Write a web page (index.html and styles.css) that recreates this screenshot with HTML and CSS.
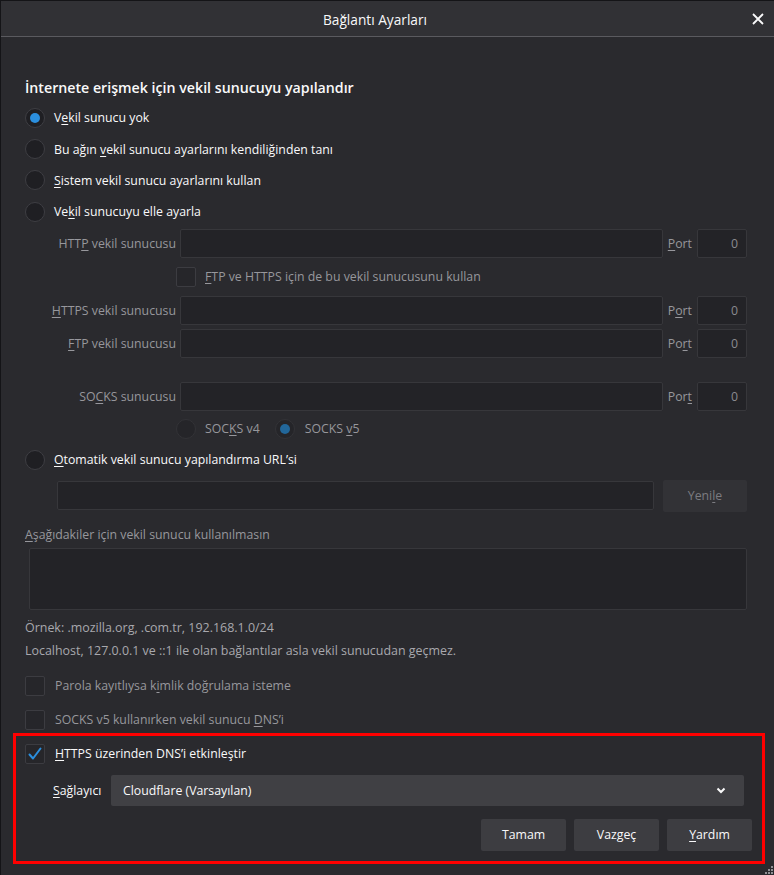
FILE: index.html
```html
<!DOCTYPE html>
<html lang="tr">
<head>
<meta charset="utf-8">
<title>Bağlantı Ayarları</title>
<link rel="stylesheet" href="styles.css">
</head>
<body>
<div class="dialog">
  <header class="titlebar">
    <span></span>
    <span class="title">Bağlantı Ayarları</span>
    <span class="close-wrap">
      <svg class="close" width="12" height="12" viewBox="0 0 12 12"><path d="M1 1 L11 11 M11 1 L1 11" stroke="#f9f9fa" stroke-width="1.8" fill="none"/></svg>
    </span>
  </header>

  <main class="content">
    <h1 class="heading">İnternete erişmek için vekil sunucuyu yapılandır</h1>

    <div class="radios">
      <div class="opt"><span class="radio checked"></span><span>V<u>e</u>kil sunucu yok</span></div>
      <div class="opt"><span class="radio"></span><span>Bu ağın <u>v</u>ekil sunucu ayarlarını kendiliğinden tanı</span></div>
      <div class="opt"><span class="radio"></span><span><u>S</u>istem vekil sunucu ayarlarını kullan</span></div>
      <div class="opt"><span class="radio"></span><span>Ve<u>k</u>il sunucuyu elle ayarla</span></div>
    </div>

    <div class="manual">
      <div class="prow first">
        <span class="plabel">HTT<u>P</u> vekil sunucusu</span>
        <span class="input grow"></span>
        <span class="portlabel"><u>P</u>ort</span>
        <span class="input port">0</span>
      </div>
      <div class="crow share">
        <span class="check dis"></span><span class="dim"><u>F</u>TP ve HTTPS için de bu vekil sunucusunu kullan</span>
      </div>
      <div class="prow">
        <span class="plabel"><u>H</u>TTPS vekil sunucusu</span>
        <span class="input grow"></span>
        <span class="portlabel">P<u>o</u>rt</span>
        <span class="input port">0</span>
      </div>
      <div class="prow tight">
        <span class="plabel"><u>F</u>TP vekil sunucusu</span>
        <span class="input grow"></span>
        <span class="portlabel">Po<u>r</u>t</span>
        <span class="input port">0</span>
      </div>
      <div class="prow socks">
        <span class="plabel">SO<u>C</u>KS sunucusu</span>
        <span class="input grow"></span>
        <span class="portlabel">Por<u>t</u></span>
        <span class="input port">0</span>
      </div>
      <div class="versions">
        <span class="radio dis"></span><span class="dim v4">SOC<u>K</u>S v4</span>
        <span class="radio dis checked"></span><span class="dim">SOCKS <u>v</u>5</span>
      </div>
    </div>

    <div class="opt auto"><span class="radio"></span><span><u>O</u>tomatik vekil sunucu yapılandırma URL’si</span></div>
    <div class="urlrow">
      <span class="input grow url"></span>
      <span class="btn dis-btn">Yeni<u>l</u>e</span>
    </div>

    <div class="nolabel dim"><u>A</u>şağıdakiler için vekil sunucu kullanılmasın</div>
    <div class="textarea"></div>
    <p class="note first-note">Örnek: .mozilla.org, .com.tr, 192.168.1.0/24</p>
    <p class="note">Localhost, 127.0.0.1 ve ::1 ile olan bağlantılar asla vekil sunucudan geçmez.</p>

    <div class="crow opt-check first-check"><span class="check dis"></span><span class="dim">Parola kayıtlıysa k<u>i</u>mlik doğrulama isteme</span></div>
    <div class="crow opt-check"><span class="check dis"></span><span class="dim">SOCKS v5 kullanırken vekil sunucu <u>D</u>NS’i</span></div>

    <section class="highlight">
      <div class="crow doh">
        <span class="check on">
          <svg width="20" height="20" viewBox="0 0 20 20"><path d="M4.5 10.5 L8 14.5 L15.5 4.5" stroke="#2b8fde" stroke-width="2" fill="none" stroke-linecap="round" stroke-linejoin="round"/></svg>
        </span>
        <span><u>H</u>TTPS üzerinden DNS’i etkinleştir</span>
      </div>
      <div class="provider">
        <span class="plab"><u>S</u>ağlayıcı</span>
        <span class="select">
          <span>Cloudflare (Varsayılan)</span>
          <svg width="10" height="7" viewBox="0 0 10 7"><path d="M1.5 1.5 L5 5 L8.5 1.5" stroke="#f9f9fa" stroke-width="2" fill="none"/></svg>
        </span>
      </div>
      <div class="buttons">
        <span class="btn">Tamam</span>
        <span class="btn">Vazgeç</span>
        <span class="btn"><u>Y</u>ardım</span>
      </div>
    </section>
  </main>

  <svg class="grip" width="9" height="9" viewBox="0 0 9 9">
    <rect x="6" y="0" width="2" height="2" fill="#8f8f94"/>
    <rect x="3" y="3" width="2" height="2" fill="#8f8f94"/>
    <rect x="6" y="3" width="2" height="2" fill="#8f8f94"/>
    <rect x="0" y="6" width="2" height="2" fill="#8f8f94"/>
    <rect x="3" y="6" width="2" height="2" fill="#8f8f94"/>
    <rect x="6" y="6" width="2" height="2" fill="#8f8f94"/>
  </svg>
</div>
</body>
</html>
```

FILE: styles.css
```css
* { box-sizing: border-box; }

html, body {
  margin: 0;
  padding: 0;
  background: #2a2a2e;
}

body {
  font-family: "Open Sans", "Noto Sans", sans-serif;
  font-size: 12.3px;
  color: #f9f9fa;
}

u { text-decoration-thickness: 1px; text-underline-offset: 2px; }

.dialog {
  position: relative;
  width: 774px;
  height: 875px;
  border-left: 1px solid #141417;
  border-top: 1px solid #141417;
  background: #2a2a2e;
  overflow: hidden;
}

.titlebar {
  height: 36px;
  background: #313135;
  border-bottom: 1px solid #5a5a5f;
  display: grid;
  grid-template-columns: 1fr auto 1fr;
  align-items: center;
}

.title {
  font-size: 13.7px;
  color: #f9f9fa;
  padding-top: 1px;
  margin-right: 25px;
}

.close-wrap {
  display: flex;
  justify-content: flex-end;
  padding-right: 10px;
  padding-top: 1px;
}

.close { display: block; }

.content {
  padding: 0 27px 0 24px;
}

.heading {
  margin: 41px 0 0;
  font-size: 14.2px;
  font-weight: 600;
  line-height: 20px;
  color: #f9f9fa;
}

.radios { margin-top: 4px; }

.opt {
  height: 31.4px;
  display: flex;
  align-items: center;
}

.radio {
  width: 20px;
  height: 20px;
  border-radius: 50%;
  background: #1f1f23;
  border: 1px solid #3e3e43;
  margin-right: 9px;
  flex: none;
  display: flex;
  align-items: center;
  justify-content: center;
}

.radio.checked::after {
  content: "";
  width: 10px;
  height: 10px;
  border-radius: 50%;
  background: #2b8fde;
}

.radio.dis {
  background: #252529;
  border-color: #333337;
}

.radio.dis.checked::after { background: #22679a; }

.dim { color: #97979c; }

.prow {
  display: flex;
  align-items: center;
  height: 29px;
  margin-top: 9px;
}

.prow.first { margin-top: 1.4px; }
.prow.tight { margin-top: 4px; }
.prow.socks { margin-top: 24px; }

.plabel {
  width: 151px;
  text-align: right;
  margin-right: 4px;
  color: #97979c;
  flex: none;
}

.input {
  height: 29px;
  background: #232327;
  border: 1px solid #37373b;
  border-radius: 2px;
}

.grow { flex: 1; }

.portlabel {
  margin: 0 5px;
  color: #97979c;
}

.input.port {
  width: 50px;
  flex: none;
  display: flex;
  align-items: center;
  justify-content: flex-end;
  padding-right: 8px;
  color: #8a8a8f;
}

.crow {
  display: flex;
  align-items: center;
  height: 20px;
}

.crow.share {
  margin-top: 9px;
  padding-left: 151px;
}

.check {
  width: 20px;
  height: 20px;
  border: 1px solid #3c3c41;
  background: #26262a;
  border-radius: 2px;
  margin-right: 10px;
  flex: none;
  display: flex;
  align-items: center;
  justify-content: center;
}

.check svg { display: block; margin: -1px; }

.crow.share .check { margin-right: 9px; }

.versions {
  display: flex;
  align-items: center;
  height: 20px;
  margin-top: 8px;
  padding-left: 151px;
}

.versions .v4 { margin-right: 15px; }
.versions .radio.checked { margin-right: 10px; }

.opt.auto {
  height: 20px;
  margin-top: 11px;
}

.urlrow {
  display: flex;
  align-items: center;
  height: 32px;
  margin-top: 10px;
  padding-left: 32px;
  gap: 9px;
}

.btn {
  height: 32px;
  width: 85px;
  display: flex;
  align-items: center;
  justify-content: center;
  background: #3d3d41;
  border-radius: 2px;
  color: #f9f9fa;
}

.btn.dis-btn {
  width: 84px;
  background: #323236;
  color: #7c7c81;
}

.nolabel {
  margin-top: 13px;
  line-height: 20px;
}

.textarea {
  margin: 3px 0 0 4px;
  height: 62px;
  background: #232327;
  border: 1px solid #37373b;
  border-radius: 2px;
}

.note {
  margin: 0;
  line-height: 23px;
  font-size: 12.45px;
  color: #a8a8ad;
}

.first-note { margin-top: 6px; }

.opt-check { margin-top: 14px; }

.highlight {
  margin: 3px -18px 0 -12px;
  border: 3px solid #ff0000;
  padding: 8px 0 10px 9px;
}

.provider {
  display: flex;
  align-items: center;
  height: 31px;
  margin-top: 11px;
  padding-left: 28px;
  margin-right: 18px;
}

.plab {
  width: 58px;
  flex: none;
}

.select {
  flex: 1;
  height: 31px;
  background: #404044;
  border-radius: 2px;
  display: flex;
  align-items: center;
  justify-content: space-between;
  padding: 0 18px 0 12px;
}

.select svg { display: block; }

.buttons {
  display: flex;
  justify-content: flex-end;
  gap: 8px;
  margin-top: 13px;
  margin-right: 10px;
}

.grip {
  position: absolute;
  right: 0;
  bottom: 0;
}
```
